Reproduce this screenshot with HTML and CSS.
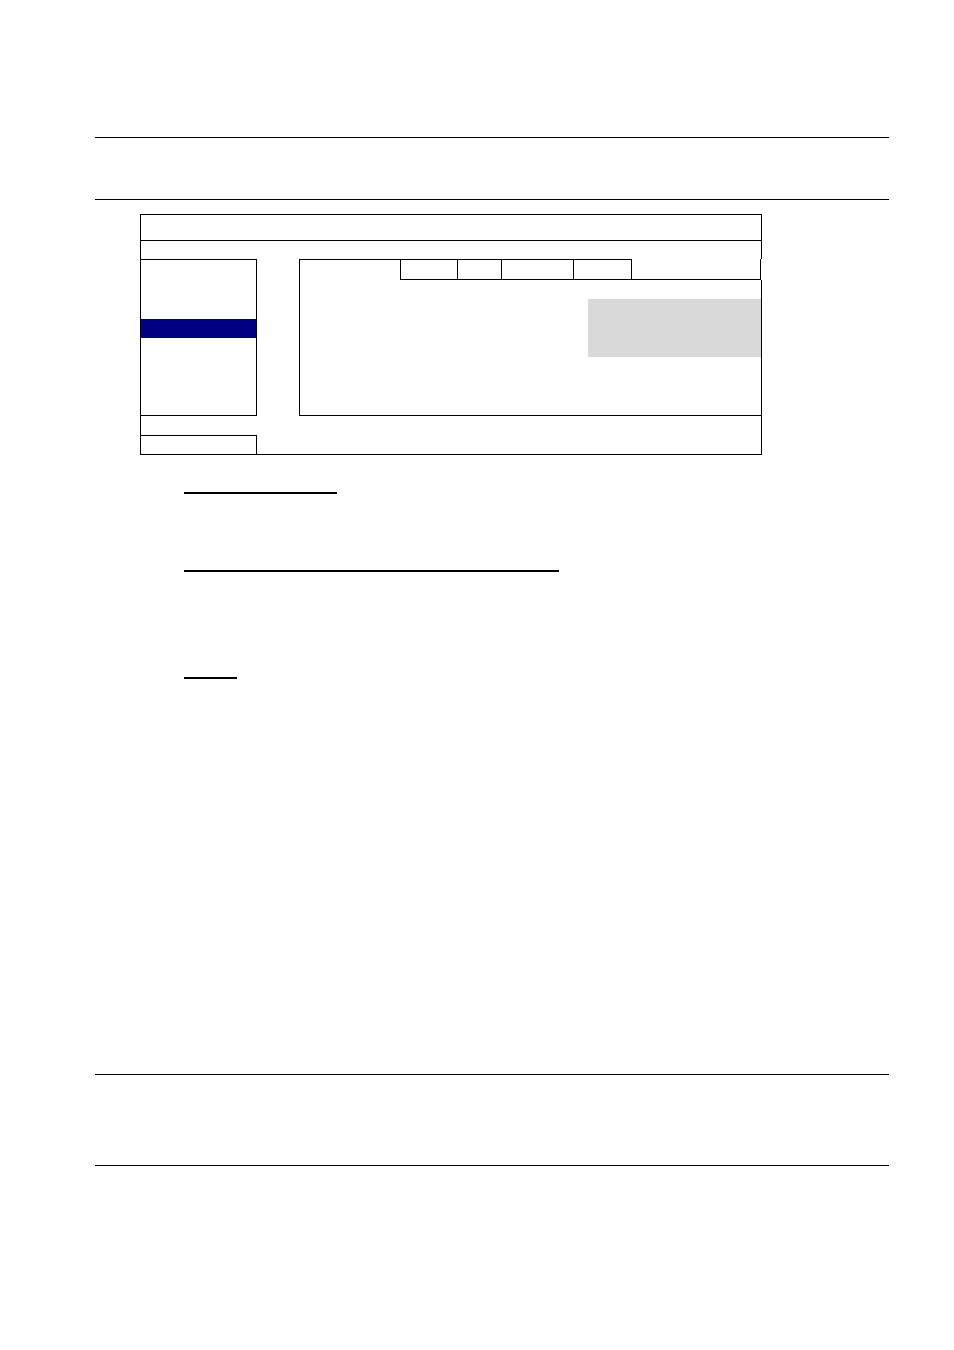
FILE: index.html
```html
<!DOCTYPE html>
<html lang="en">
<head>
  <meta charset="UTF-8">
  <meta name="viewport" content="width=device-width, initial-scale=1.0">
  <link rel="stylesheet" href="styles.css">
</head>
<body>
  <main class="page">
    <section class="note note-top"></section>

    <section class="menu">
      <div class="menu-title"></div>
      <div class="menu-space"></div>
      <div class="menu-body">
        <div class="sidebar">
          <div class="selected"></div>
        </div>
        <div class="panel">
          <div class="tabs">
            <div class="tab active"></div>
            <div class="tab tab-medium"></div>
            <div class="tab tab-small"></div>
            <div class="tab tab-large"></div>
            <div class="tab tab-last"></div>
            <div class="tab tab-rest"></div>
          </div>
          <div class="panel-content">
            <div class="values"></div>
          </div>
        </div>
      </div>
      <div class="menu-footer">
        <div class="exit"></div>
      </div>
    </section>

    <section class="details">
      <div class="heading heading-first"></div>
      <div class="heading heading-second"></div>
      <div class="heading heading-third"></div>
    </section>

    <section class="note note-bottom"></section>
  </main>
</body>
</html>
```

FILE: styles.css
```css
* {
  box-sizing: border-box;
}

body {
  font-family: "Liberation Sans", Arial, sans-serif;
  margin: 0;
  background-color: #fff;
  color: #000;
}

.page {
  padding: 137px 65px 184px 95px;
}

.note {
  border-top: 1px solid #000;
  border-bottom: 1px solid #000;
}

.note-top {
  height: 63px;
}

.note-bottom {
  height: 92px;
}

/* menu window */
.menu {
  margin: 14px 127px 0 45px;
  border: 1px solid #000;
  border-right: none;
}

.menu-title {
  height: 26px;
  border-right: 1px solid #000;
  border-bottom: 1px solid #000;
}

.menu-space {
  height: 18px;
  border-right: 1px solid #000;
}

.menu-body {
  display: flex;
  gap: 42px;
}

.sidebar {
  width: 116px;
  padding-top: 59px;
  border: 1px solid #000;
  border-left: none;
}

.selected {
  height: 19px;
  background-color: #000080;
}

.panel {
  flex: 1;
}

/* tabs */
.tabs {
  display: flex;
  height: 21px;
  margin-right: 1px;
}

.tab {
  border: 1px solid #000;
  border-right: none;
}

.active {
  width: 101px;
  border-bottom: none;
}

.tab-small {
  width: 44px;
}

.tab-medium {
  width: 57px;
}

.tab-large {
  width: 72px;
}

.tab-last {
  width: 59px;
  border-right: 1px solid #000;
}

.tab-rest {
  flex: 1;
  border-top: none;
  border-left: none;
  border-right: 1px solid #000;
}

.panel-content {
  display: flex;
  justify-content: flex-end;
  height: 136px;
  padding-top: 19px;
  border: 1px solid #000;
  border-top: none;
}

.values {
  width: 173px;
  height: 58px;
  background-color: #d9d9d9;
}

.menu-footer {
  padding-top: 19px;
  border-right: 1px solid #000;
}

.exit {
  width: 116px;
  height: 19px;
  border-top: 1px solid #000;
  border-right: 1px solid #000;
}

/* underlined headings */
.details {
  padding: 37px 0 395px 89px;
}

.heading {
  height: 2px;
  background-color: #000;
}

.heading-first {
  width: 153px;
}

.heading-second {
  width: 375px;
  margin-top: 76px;
}

.heading-third {
  width: 53px;
  margin-top: 105px;
}
```
